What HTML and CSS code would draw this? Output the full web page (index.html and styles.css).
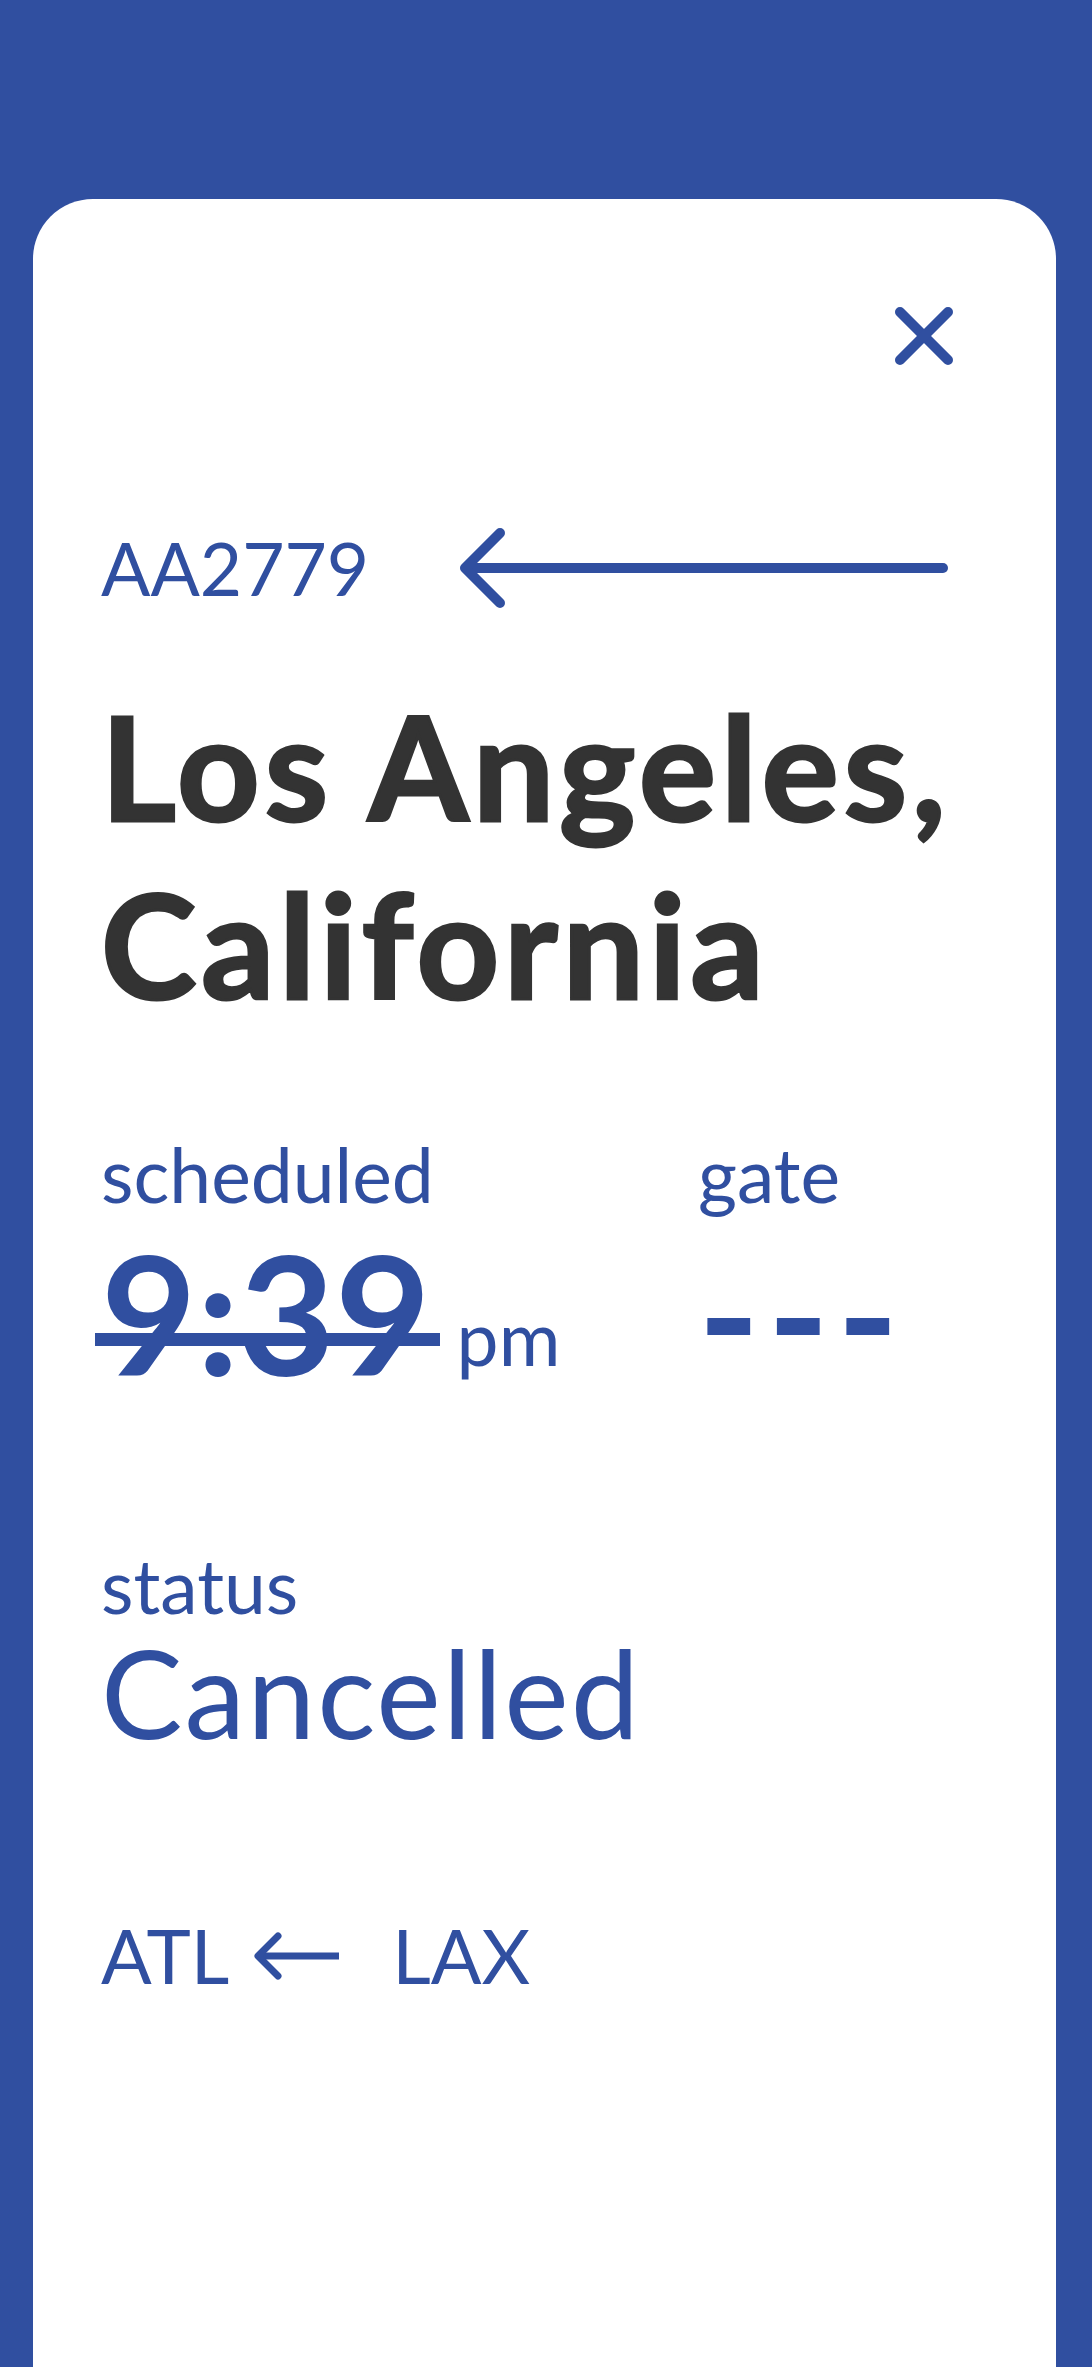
FILE: index.html
```html
<!DOCTYPE html>
<html lang="en">
<head>
    <meta charset="UTF-8">
    <meta name="viewport" content="width=device-width, initial-scale=1.0">
    <title>AA2779 - Los Angeles</title>
    <link rel="stylesheet" href="styles.css">
</head>
<body>

    <!-- Tarjeta del vuelo -->
    <div class="tarjeta">
        <div class="cabecera">
            <button class="cerrar" aria-label="Cerrar">
                <svg width="60" height="58" viewBox="0 0 60 58">
                    <line x1="6" y1="5" x2="54" y2="53" stroke="currentColor" stroke-width="10" stroke-linecap="round"/>
                    <line x1="54" y1="5" x2="6" y2="53" stroke="currentColor" stroke-width="10" stroke-linecap="round"/>
                </svg>
            </button>
        </div>

        <div class="vuelo">
            <span class="codigo">AA2779</span>
            <svg class="flecha" width="498" height="80" viewBox="0 0 498 80">
                <line x1="10" y1="40" x2="487" y2="40" stroke="currentColor" stroke-width="10" stroke-linecap="round"/>
                <polyline points="44,5 9,40 44,75" fill="none" stroke="currentColor" stroke-width="10" stroke-linecap="round" stroke-linejoin="round"/>
            </svg>
        </div>

        <h1 class="ciudad">Los Angeles, California</h1>

        <div class="datos">
            <div class="etiqueta">scheduled</div>
            <div class="etiqueta">gate</div>
            <div class="hora">
                <span class="numero">9:39</span>
                <span class="ampm">pm</span>
            </div>
            <div class="puerta">---</div>
        </div>

        <div class="estado">
            <div class="etiqueta">status</div>
            <div class="valor">Cancelled</div>
        </div>

        <div class="ruta">
            <span>ATL</span>
            <svg class="flecha-chica" width="86" height="48" viewBox="0 0 86 48">
                <line x1="6" y1="24" x2="86" y2="24" stroke="currentColor" stroke-width="7"/>
                <polyline points="25,4 5,24 25,44" fill="none" stroke="currentColor" stroke-width="7" stroke-linecap="round" stroke-linejoin="round"/>
            </svg>
            <span>LAX</span>
        </div>
    </div>

</body>
</html>
```

FILE: styles.css
```css
body {
    font-family: 'Lato', 'Open Sans', sans-serif;
    margin: 0;
    padding: 0;
    background-color: #304fa0;
    color: #304fa0;
    height: 100vh;
    overflow: hidden;
}

.tarjeta {
    box-sizing: border-box;
    margin: 199px 36px 0 33px;
    height: calc(100vh - 199px);
    background-color: #fff;
    border-radius: 60px 60px 0 0;
    padding: 108px 102px 0 68px;
}

.cabecera {
    display: flex;
    justify-content: flex-end;
}

.cerrar {
    border: none;
    background: none;
    padding: 0;
    color: #304fa0;
    cursor: pointer;
    display: block;
}

.cerrar svg {
    display: block;
}

.vuelo {
    display: flex;
    align-items: center;
    margin-top: 163px;
}

.codigo {
    font-size: 73px;
    line-height: 1;
}

.flecha {
    display: block;
    margin-left: auto;
}

.ciudad {
    font-size: 144px;
    font-weight: 700;
    line-height: 178px;
    color: #333;
    margin: 69px 0 0 0;
    letter-spacing: 5px;
    -webkit-text-stroke: 3px #333;
}

.datos {
    display: grid;
    grid-template-columns: 597px auto;
    margin-top: 104px;
}

.etiqueta {
    font-size: 75px;
    line-height: 1;
}

.hora {
    display: flex;
    align-items: flex-end;
    margin-top: 12px;
}

.numero {
    font-size: 165px;
    font-weight: 700;
    line-height: 1;
    position: relative;
}

/* linea que tacha la hora */
.numero::after {
    content: "";
    position: absolute;
    left: -6px;
    right: -9px;
    top: 103px;
    height: 13px;
    background-color: #304fa0;
}

.ampm {
    font-size: 75px;
    line-height: 1;
    margin: 0 0 20px 26px;
}

.puerta {
    font-size: 165px;
    font-weight: 700;
    line-height: 1;
    margin-top: 18px;
    letter-spacing: 8px;
}

.estado {
    margin-top: 153px;
}

.valor {
    font-size: 122px;
    line-height: 1;
    margin-top: 8px;
    letter-spacing: 2px;
}

.ruta {
    display: flex;
    align-items: center;
    margin-top: 165px;
    font-size: 75px;
    line-height: 1;
}

.flecha-chica {
    display: block;
    margin: 0 53px 0 24px;
}
```
